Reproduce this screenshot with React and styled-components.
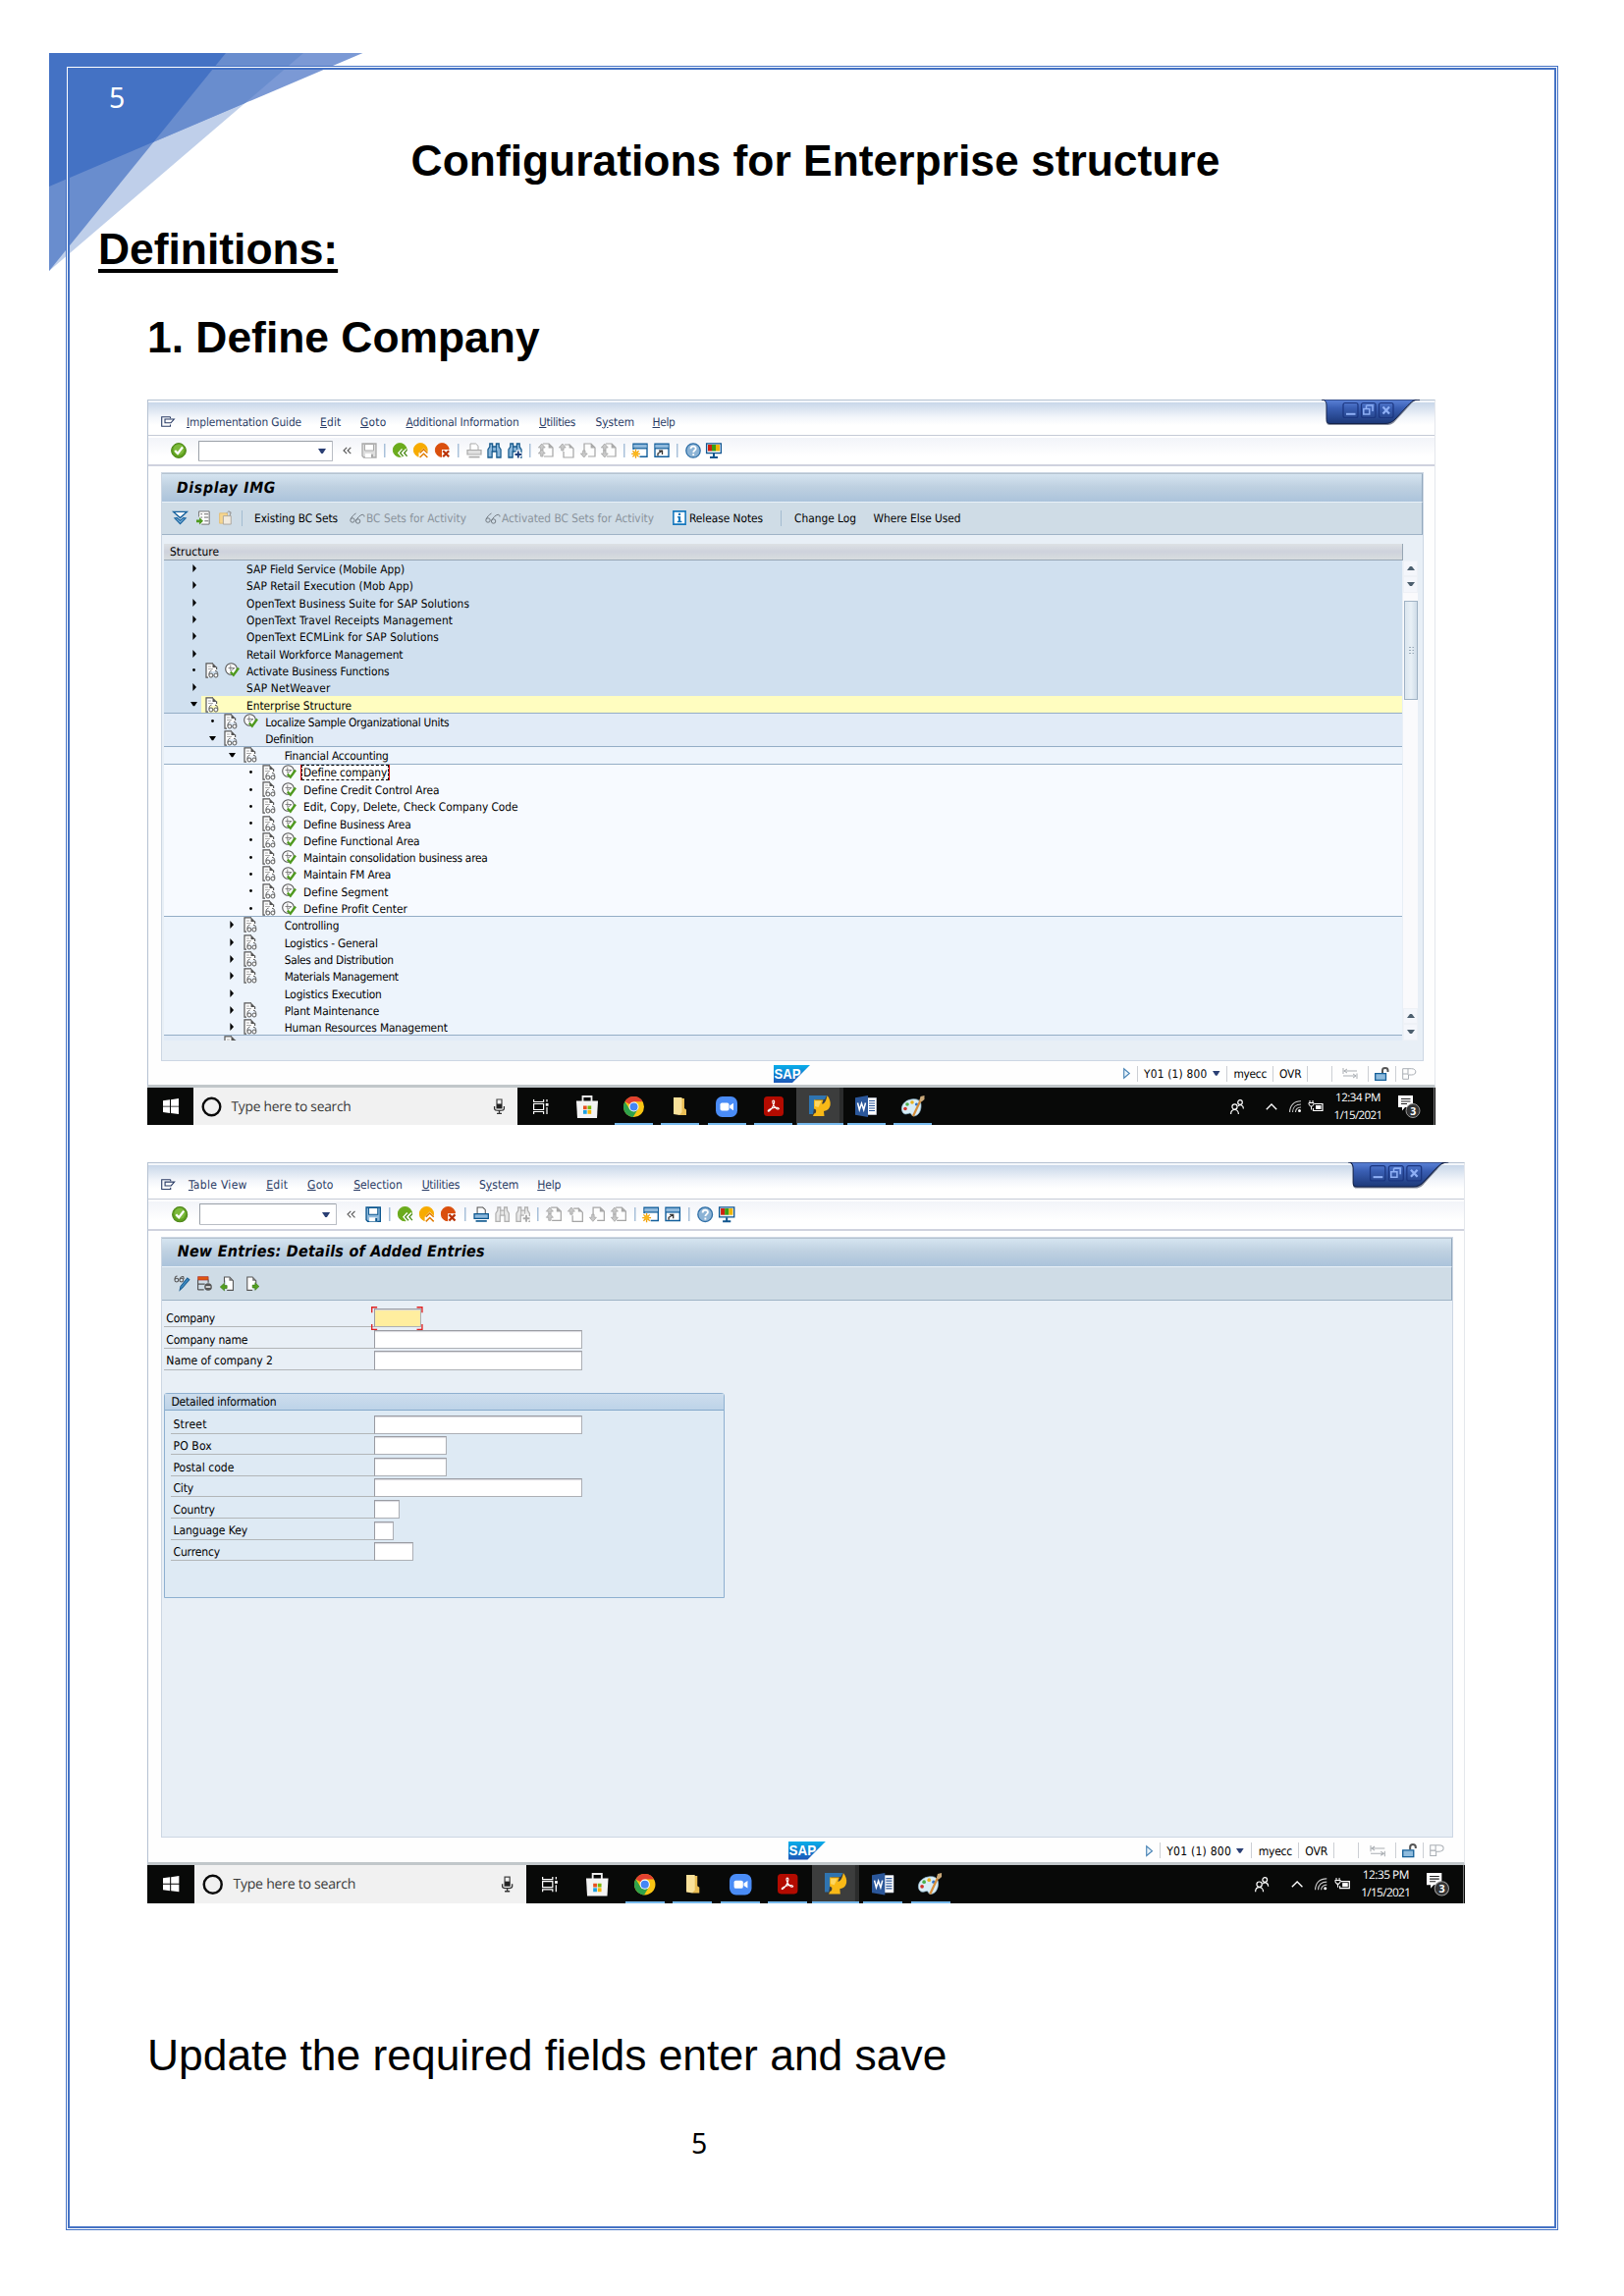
import React from "react";
import styled, { createGlobalStyle } from "styled-components";

const UI = '"DejaVu Sans Condensed", "DejaVu Sans", sans-serif';
const SEGOE = '"Open Sans", "Noto Sans", sans-serif';

const Global = createGlobalStyle`
  *, *::before, *::after { box-sizing: border-box; }
  body { margin: 0; background: #fff; }
`;

/* ---------- text with a set advance width ---------- */

let ctx = null;
const spacingFor = (text, font, width) => {
  if (!width) return 0;
  if (!ctx) ctx = document.createElement("canvas").getContext("2d");
  ctx.font = font;
  return (width - ctx.measureText(text).width) / text.length;
};

const TextSpan = styled.span`
  display: block;
  flex: none;
  width: ${(p) => (p.$w ? `${p.$w}px` : "auto")};
  font: ${(p) => p.$font};
  color: ${(p) => p.$color || "#000"};
  white-space: pre;
  text-rendering: geometricPrecision;
  margin: ${(p) => p.$dy}px 0 ${(p) => -p.$dy}px ${(p) => p.$ml || 0}px;
  line-height: ${(p) => p.$lh || "16px"};
`;

function Text({ children, w, size = 11.8, face = UI, style = "", color, ml, lh, mnemonic, dy = 0 }) {
  const font = `${style} ${size}px ${face}`.trim();
  const gap = spacingFor(children, font, w);
  const body =
    mnemonic === undefined ? children : (
      <>
        {children.slice(0, mnemonic)}
        <u>{children[mnemonic]}</u>
        {children.slice(mnemonic + 1)}
      </>
    );
  return (
    <TextSpan $font={font} $w={w} $color={color} $ml={ml} $lh={lh} $dy={dy} style={{ letterSpacing: `${gap.toFixed(3)}px` }}>
      {body}
    </TextSpan>
  );
}

/* ---------- document page ---------- */

const Page = styled.div`
  position: relative;
  width: 1654px;
  height: 2339px;
  padding: 67px;
  background: #fff;
  overflow: hidden;
`;

const Corner = styled.svg`
  position: absolute;
  left: 50px;
  top: 54px;
  width: 320px;
  height: 223px;
`;

const Frame = styled.main`
  position: relative;
  width: 1520px;
  height: 2205px;
  padding: 70px 25px 0 32px;
  border: 1px solid #4472c4;
  box-shadow: inset 0 0 0 1px #fff, inset 0 0 0 3px #4472c4;
`;

const CornerNumber = styled.span`
  position: absolute;
  left: 43px;
  top: 11px;
  font: 28.5px/40px "Noto Sans", sans-serif;
  color: #fff;
`;

const Heading = styled.h1`
  margin: 0 0 38px;
  font: bold 44.4px/52px "Liberation Sans", Arial, sans-serif;
  color: #000;
  text-align: ${(p) => (p.$center ? "center" : "left")};
  padding-left: ${(p) => p.$indent || 0}px;
  text-decoration: ${(p) => (p.$underline ? "underline" : "none")};
  text-decoration-thickness: 4px;
  text-underline-offset: 5px;
  text-decoration-skip-ink: none;
  white-space: pre;
`;

const Shots = styled.div`
  display: flex;
  flex-direction: column;
  gap: 38px;
  margin: -1px 0 0 50px;
`;

const Note = styled.p`
  margin: 129px 0 0 50px;
  font: 44.4px/52px "Liberation Sans", Arial, sans-serif;
  color: #000;
`;

const PageNumber = styled.p`
  margin: 43px 0 0 604px;
  font: 28.5px/40px "Noto Sans", sans-serif;
  color: #000;
`;

/* ---------- SAP window ---------- */

const Desktop = styled.section`
  zoom: ${(p) => p.$zoom};
  display: flex;
  flex-direction: column;
  width: 1312px;
  height: ${(p) => p.$h}px;
`;

const Win = styled.div`
  position: relative;
  flex: 1;
  min-height: 0;
  display: flex;
  flex-direction: column;
  background: #fefefe;
  border: 1px solid #b6c2d2;
  border-right-color: #e4e7ec;
  border-bottom: 3px solid #c1c7ca;
`;

const MenuBar = styled.div`
  display: flex;
  align-items: center;
  flex: none;
  height: 36px;
  padding: 8px 0 0 13px;
  border-top: 2px solid #f4f7fb;
  border-bottom: 1px solid #c5cad6;
  background: linear-gradient(#c8d7e9, #f2f5fa 45%, #fff 70%);
`;

const ToolBar = styled.div`
  display: flex;
  align-items: center;
  flex: none;
  height: 31px;
  padding: 0 0 1px 23px;
  border-top: 2px solid #fff;
  border-bottom: 2px solid #cfd2de;
  background: linear-gradient(#f2f4f9, #fff 70%);
`;

const Tools = styled.div`
  display: flex;
  align-items: center;
  gap: 5.5px;
  margin-left: 10px;
`;

const ToolSep = styled.i`
  width: 5px;
  height: 14px;
  background: linear-gradient(#a9c1da, #a9c1da) center / 1.5px 100% no-repeat;
`;

const Command = styled.div`
  display: flex;
  align-items: center;
  justify-content: flex-end;
  width: 137px;
  height: 21px;
  margin-left: 12px;
  padding-right: 6px;
  background: #fff;
  border: 1.5px solid #9aa0a8;
  border-right-color: #b9bdc4;
  border-bottom-color: #b9bdc4;
  border-radius: 1px;
`;

const Work = styled.div`
  display: flex;
  flex-direction: column;
  flex: none;
  height: ${(p) => p.$h}px;
  margin: 6px 11px 0 13px;
  border: 1px solid #ccd6e3;
  background: #e8eff6;
`;

const TitleBar = styled.div`
  display: flex;
  align-items: center;
  flex: none;
  height: 30px;
  padding: 0 0 3px 15px;
  border-top: 1.5px solid #b5c3d0;
  border-right: 1px solid #92a8bd;
  border-bottom: 1px solid #e9f1f8;
  background: linear-gradient(#d5e4f0, #bfd1e1 45%, #abc3db);
`;

const AppBar = styled.div`
  display: flex;
  align-items: center;
  flex: none;
  height: 33px;
  padding: 0 0 1px 11px;
  border-right: 1px solid #92a8bd;
  border-bottom: 1.5px solid #9fb3c6;
  background: #cfdce6;
`;

const AppSep = styled.i`
  flex: none;
  width: 1px;
  height: 16px;
  margin-left: ${(p) => p.$ml}px;
  background: #a3bcd1;
`;

const StatusBar = styled.div`
  display: flex;
  align-items: center;
  flex: 1;
  padding: 1px 0 0 637px;
`;

const StatusSep = styled.i`
  flex: none;
  width: 1px;
  height: 16px;
  margin-left: ${(p) => p.$ml}px;
  background: #cccfd4;
`;

const Controls = styled.svg`
  position: absolute;
  right: 14px;
  top: -1px;
  width: 101px;
  height: 28px;
`;

const IconSvg = styled.svg`
  display: block;
  flex: none;
  width: ${(p) => p.$w}px;
  height: ${(p) => p.$h || p.$w}px;
  margin-left: ${(p) => p.$ml || 0}px;
  overflow: visible;
`;

/* ---------- tree ---------- */

const TreeHead = styled.div`
  flex: none;
  height: 17px;
  width: 1262px;
  margin: 9px 0 0 2px;
  padding-left: 6px;
  background: linear-gradient(#dde1e4, #ced2dc 50%, #d8dddf);
  border-bottom: 1.5px solid #97a6b4;
  border-right: 1px solid #97a6b4;
`;

const TreeBody = styled.div`
  display: flex;
  gap: 1px;
  margin-left: 2px;
  height: 488.5px;
`;

const Tree = styled.div`
  width: 1261px;
  height: 100%;
  overflow: hidden;
  background: ${(p) => p.$bg};
`;

const TreeRow = styled.div`
  display: flex;
  align-items: center;
  height: 17.31px;
  padding-left: ${(p) => 24 + p.$level * 19.35}px;
  border-bottom: 1.5px solid ${(p) => (p.$line ? "#94adc6" : "transparent")};
  background: ${(p) =>
    p.$hot ? `linear-gradient(90deg, ${p.$bg} 38px, #fffdc0 38px)` : p.$bg};
`;

const ArrowCell = styled.span`
  display: flex;
  justify-content: center;
  width: 13px;
  margin-right: 5px;
`;

const Slot = styled.span`
  display: block;
  width: ${(p) => p.$w}px;
  height: 16px;
`;

const Focus = styled.span`
  display: block;
  height: 16px;
  margin-left: -2px;
  padding: 0 1px;
  border: 1px dashed #000;
  background: #fff;
  box-shadow: -1px 0 0 #e01010, 1px 0 0 #e01010;
`;

const Scroll = styled.div`
  display: flex;
  flex-direction: column;
  width: 15px;
  height: 100%;
  background: #fafafc;
`;

const ScrollButton = styled.span`
  display: flex;
  align-items: center;
  justify-content: center;
  height: 16.3px;
  border: 1px solid #eef1f6;
  background: #f4f6fb;
`;

const Thumb = styled.span`
  display: flex;
  align-items: center;
  justify-content: center;
  height: 101px;
  margin: 8px 0 auto 1px;
  border: 1px solid #9fb2c4;
  background: linear-gradient(90deg, #dbe6ef, #e8f0f6 50%, #cfdce8);
`;

/* ---------- entry form ---------- */

const Form = styled.div`
  padding: 8px 0 0 2px;
`;

const FieldRow = styled.div`
  display: flex;
  height: 21.15px;
`;

const FieldLabel = styled.label`
  display: block;
  width: ${(p) => p.$w}px;
  height: 18.6px;
  padding: 1px 0 0 2px;
  border-bottom: 1.5px solid #b2b6b8;
`;

const Field = styled.span`
  position: relative;
  display: block;
  width: ${(p) => p.$w}px;
  height: 18.6px;
  border: 1.5px solid #9a9ca3;
  border-right-color: #adb0b5;
  border-bottom-color: #adb0b5;
  background: ${(p) => (p.$active ? "#ffee9f" : "#fff")};
  box-shadow: inset 0 1px 1px #d9d9de;
`;

const FocusCorners = styled.svg`
  position: absolute;
  left: -3.5px;
  top: -3.5px;
  width: 51.5px;
  height: 23.5px;
`;

const Group = styled.fieldset`
  width: 558px;
  height: 204.5px;
  margin: 20.5px 0 0;
  padding: 0;
  border: 1px solid #8eb0d0;
  border-radius: 3px 3px 0 0;
  background: #deeaf4;
`;

const GroupHead = styled.div`
  height: 17px;
  margin-bottom: 4px;
  padding-left: 6px;
  border-bottom: 1.5px solid #84a9cb;
  background: linear-gradient(#cddded, #bdd3e8);
`;

const GroupRows = styled.div`
  padding-left: 6px;
`;

/* ---------- Windows taskbar ---------- */

const TaskBar = styled.div`
  display: flex;
  flex: none;
  height: 38px;
  background: #080908;
`;

const Start = styled.div`
  display: flex;
  align-items: center;
  justify-content: center;
  width: 47px;
`;

const Search = styled.div`
  display: flex;
  align-items: center;
  width: 330px;
  padding-left: 8px;
  background: #f1f1f1;
`;

const TaskCell = styled.div`
  display: flex;
  align-items: center;
  justify-content: center;
  width: 47.4px;
  background: ${(p) => (p.$active ? "#3c3d3d" : "none")};
  box-shadow: ${(p) => (p.$active ? "inset -4px 0 0 #2b2c2c" : "none")};
`;

const TaskMark = styled.span`
  display: flex;
  align-items: center;
  justify-content: center;
  width: ${(p) => (p.$wide ? 47 : 39)}px;
  height: 100%;
  border-top: 2px solid transparent;
  border-bottom: 2px solid ${(p) => (p.$on ? "#76b9ed" : "transparent")};
`;

const Tray = styled.div`
  display: flex;
  align-items: center;
  margin-left: auto;
  padding-right: 1px;
`;

const Clock = styled.div`
  display: flex;
  flex-direction: column;
  align-items: center;
  width: 50px;
  margin-left: 10px;
`;

const ShowDesktop = styled.i`
  width: 1px;
  height: 38px;
  margin-left: 13px;
  background: #777;
`;

/* ---------- icons ---------- */

const I = ({ w = 16, h, ml, vb = "0 0 16 16", children }) => (
  <IconSvg $w={w} $h={h} $ml={ml} viewBox={vb} preserveAspectRatio="none" fill="none">{children}</IconSvg>
);

const MenuIcon = () => (
  <I w={14} h={14} vb="0 0 14 14">
    <path d="M9.500.700H.700v9.600h8.800V8.500M9.500.700v1.500" stroke="#2b3d66" strokeWidth="1.100" />
    <path d="M4 3h9.300L10 6.800H4z" fill="#fff" stroke="#2b3d66" strokeWidth="1.100" />
  </I>
);
const CheckIcon = () => (
  <I>
    <circle cx="8" cy="8" r="7.4" fill="#5fa01e" stroke="#4c8419" />
    <circle cx="8" cy="7" r="5.5" fill="#7dba3c" />
    <path d="M4.2 8l2.8 3 5-6.5" stroke="#fff" strokeWidth="2.2" />
  </I>
);
const Down = ({ w = 8, ml, color = "#2a3f74" }) => (
  <I w={w} h={w * 0.62} ml={ml} vb="0 0 8 5"><path d="M0 0h8L4.8 5H3.2z" fill={color} /></I>
);
const Collapse = () => (
  <I w={9} h={8} ml={9.5} vb="0 0 9 8"><path d="M4.2.8L1 4l3.2 3.2M8.3.8L5.1 4l3.2 3.2" stroke="#555" strokeWidth="1.1" /></I>
);
const SaveIcon = ({ on }) => {
  const c = on ? "#0b568e" : "#a9a9a9";
  return (
    <I>
      <path d="M1 1h14v14H2.500L1 13.500z" fill={on ? "#8db9dc" : "#dedede"} stroke={c} strokeWidth="1.300" />
      <path d="M3.500 1.500h9v6.500h-9z" fill="#fff" stroke={c} /><path d="M4 11h8v4H4z" fill="#fff" /><path d="M10 11.500h2V15h-2z" fill={c} />
    </I>
  );
};
const RoundNav = ({ kind }) => {
  const fill = { back: "#6bab1d", up: "#f7ab00", stop: "#da4f0d" }[kind];
  return (
    <I>
      <circle cx="7.3" cy="7.5" r="6.9" fill={fill} stroke={fill} />
      {kind === "back" && (<><path d="M10.500 7.300L7.600 10.500l2.900 3.300M14.600 7.300l-2.900 3.200 2.900 3.300" stroke="#fff" strokeWidth="4" /><path d="M10.500 7.300L7.600 10.500l2.900 3.300M14.600 7.300l-2.900 3.200 2.900 3.300" stroke="#4c8c18" strokeWidth="1.300" /></>)}
      {kind === "up" && (<><path d="M5.500 10.500l5-5 5 5V16h-10z" fill="#fff" /><path d="M6.600 10.500l3.900-3.700 3.900 3.700M6.600 15l3.900-3.700 3.900 3.700" stroke="#e07b00" strokeWidth="1.500" /></>)}
      {kind === "stop" && (<><path d="M7 7h8.500v8.500H7z" fill="#fff" /><path d="M8.200 8.200l6 6m0-6l-6 6" stroke="#b93205" strokeWidth="2.200" /></>)}
    </I>
  );
};
const PrintIcon = ({ on }) => {
  const c = on ? "#0b568e" : "#a9a9a9";
  return (
    <I>
      <path d="M4 7V1h5.500l2.500 2.300V7" fill="#fff" stroke={on ? "#555" : c} />
      <path d="M1 7.500h14v4.500H1z" fill={on ? "#8db9dc" : "#e0e0e0"} stroke={c} strokeWidth="1.200" />
      <path d="M2.500 14.600h11" stroke={c} strokeWidth="1.600" />
    </I>
  );
};
const FindIcon = ({ on, next }) => {
  const c = on ? "#17598c" : "#b0b0b0";
  const f = on ? "#8ab6da" : "#e8e8e8";
  return (
    <I w={15} h={16}>
      <path d="M3 1h3v3h4V1h3v3l2 3v8h-4.500V9h-5v6H1V7l2-3z" fill={f} stroke={c} strokeWidth="1.300" />
      <path d="M6 4v5M10 4v5" stroke={c} />
      {next && <path d="M11.500 7.500v8.500M7.500 12h8" stroke="#fff" strokeWidth="4.600" />}
      {next && <path d="M11.500 8.500v7M8 12h7" stroke={on ? "#1e3f7d" : "#aaa"} strokeWidth="2" />}
    </I>
  );
};
const PageIcon = ({ dir }) => (
  <I>
    <path d={dir === "last" || dir === "first" ? "M5 1h6l4 4v9H6" : dir === "up" ? "M6 2h5l4 4v9H5V9" : "M4 9V1h7l4 4v9H8"} fill="#fdfdfd" stroke="#a5a5a5" strokeWidth="1.2" />
    <path d="M10.6 1v4.4H15z" fill="#a8a8a8" />
    {dir !== "down" && <path d="M3.800 1l3.400 4H5v3H2.700V5H.4z" fill="#c9c9c9" stroke="#a5a5a5" strokeWidth=".8" />}
    {dir === "first" && <path d="M3.800 7l3.400 4H5v3H2.700V11H.4z" fill="#c9c9c9" stroke="#a5a5a5" strokeWidth=".8" />}
    {(dir === "down" || dir === "last") && <path d="M3.800 15l3.400-4H5V8H2.700v3H.4z" fill="#c9c9c9" stroke="#a5a5a5" strokeWidth=".8" />}
  </I>
);
const SessionIcon = ({ link }) => (
  <I>
    <path d="M1 1.200h14v13H1z" fill="#fff" stroke="#135f9c" strokeWidth="1.400" />
    <path d="M1.600 1.800h12.800v3.600H1.600z" fill="#8fb9dc" /><path d="M1 5.800h14" stroke="#135f9c" strokeWidth="1.300" />
    {link ? <path d="M4 13.500V11l4-2.500M5 8.200h3.500V12" stroke="#333" strokeWidth="1.300" /> : (
      <><path d="M-.5 7h8v9h-8z" fill="#fff" /><path d="M3.500 6.800v9M-.8 11.300h8.700M.4 8.200l6.200 6.200M6.600 8.200L.4 14.400" stroke="#f2a007" strokeWidth="1.300" /><circle cx="3.500" cy="11.300" r="2.400" fill="#fbb81c" /></>
    )}
  </I>
);
const HelpIcon = () => (
  <I>
    <circle cx="8" cy="8" r="7.200" fill="#8cb3d5" stroke="#2e6ea6" strokeWidth="1.300" />
    <path d="M5.500 6.300c0-3.500 5.200-3.300 5.200-.4 0 1.800-2.500 1.900-2.500 4M8.200 11.300v1.800" stroke="#fff" strokeWidth="1.800" />
  </I>
);
const MonitorIcon = () => (
  <I>
    <path d="M.6.8h14.800v9.800H.6z" fill="#e8f1f8" stroke="#11568f" strokeWidth="1.300" />
    <path d="M2 2h4v6.500H2z" fill="#d0200f" /><path d="M6 2h4v6.500H6z" fill="#3c9e14" /><path d="M10 2h4v6.500h-4z" fill="#f0b400" />
    <path d="M8 11v3M4 15h8" stroke="#11568f" strokeWidth="2" />
  </I>
);

const ExpandAll = () => (
  <I w={15} h={15}>
    <path d="M.8 1.500h14.400L8 8z" fill="#fff" stroke="#135f9c" strokeWidth="1.500" />
    <path d="M4.500 8L8 11l3.500-3 2.500.5-6 6-6-6z" fill="#7bb0d8" stroke="#135f9c" strokeWidth="1.200" />
  </I>
);
const PositionIcon = () => (
  <I w={14} h={15} ml={9}>
    <path d="M3 7V1h12v14H6" fill="#fff" stroke="#666" /><path d="M5 4h2m2 0h5M5 7.500h2m2 0h5M9.500 11.500H14" stroke="#555" />
    <path d="M0 10h3.500V7.500L8 11.500l-4.500 4V13H0z" fill="#4f9a1f" />
  </I>
);
const BagIcon = () => (
  <I w={14} h={15} ml={9}>
    <path d="M.7 3h9v11h-9z" fill="#f6d690" stroke="#e2bd74" /><path d="M5 6h9v9H5z" fill="#f2ebdf" stroke="#a9a39a" /><path d="M9 3c2-3 4-2 4 0v3M11 1l3 1-1 3" stroke="#999" />
  </I>
);
const Glasses = ({ ml }) => (
  <I w={16} h={12} ml={ml} vb="0 0 16 12">
    <path d="M1.200 7C2 4.500 4 2.500 6.500 1M6.800 8.200C8 5.500 10.500 2.800 13 2.300c1.400 0 2 .6 2 2.200" stroke="#747c84" />
    <circle cx="3" cy="8" r="2.200" stroke="#747c84" /><circle cx="8.600" cy="9" r="2.200" stroke="#747c84" />
  </I>
);
const InfoIcon = () => (
  <I w={14} h={15} ml={19}>
    <path d="M1 1h14v14H1z" fill="#fff" stroke="#1477bd" strokeWidth="1.800" />
    <path d="M6.800 3h2.500v2.200H6.800zM5.800 6.500h3.500v5h1.500V13H5.500v-1.500h1.300V8h-1z" fill="#1477bd" />
  </I>
);
const DisplayChange = () => (
  <I w={16} h={16}>
    <path d="M1 4.500C1 2.500 2 1 3.500 1M6 4.500C6 2.500 8 1 9.500 1.500L10 4" stroke="#555" /><circle cx="2.800" cy="5" r="1.900" stroke="#555" /><circle cx="7.600" cy="5" r="1.900" stroke="#555" />
    <path d="M15.500 4.500L9 12.200 6 15l.8-3.800L13.500 3z" fill="#3e8dc4" stroke="#1d5f93" />
  </I>
);
const DeleteRow = () => (
  <I w={15} h={15} ml={8}>
    <path d="M.6.6h11v3.600H.6z" fill="#e0560f" stroke="#a33" strokeWidth=".7" /><path d="M.6 4v10.500M.6 8.500H8M.6 14.500H7M11.600 4v3" stroke="#555" strokeWidth="1.200" />
    <circle cx="11.500" cy="11.500" r="4" fill="#555" /><path d="M9 11.500h5" stroke="#fff" strokeWidth="1.500" />
  </I>
);
const EntryNav = ({ next, ml }) => (
  <I w={14} h={15} ml={ml}>
    <path d={next ? "M8 15H2V1h6l4 4v3" : "M6 1h5l4 4v10H8M5 7V1h2"} fill="#fff" stroke="#555" strokeWidth="1.200" />
    <path d={next ? "M8 1v4h4z" : "M10.500 1v4H15z"} fill="#777" />
    <path d={next ? "M15.500 11L11 7v2.500H8v3h3V15z" : "M.3 11.500L5 7.500V10h3v3H5v2.500z"} fill="#54a01f" stroke="#377714" strokeWidth=".7" />
  </I>
);

const Right = () => <I w={4} h={8} vb="0 0 5 8"><path d="M.5 0L5 4 .5 8z" fill="#000" /></I>;
const DocIcon = () => (
  <I w={14} h={16} vb="0 0 14 16">
    <path d="M1 15.500V.8h6.500L11.800 5v3.500L4 9.500V15z" fill="#fff" />
    <path d="M3 15.200H1V.8h7M11.600 4.500V7" stroke="#555" strokeWidth="1.200" /><path d="M7.500.3L12 5H7.500z" fill="#555" />
    <path d="M3 4h3M3 6.500h5" stroke="#aaa" />
    <path d="M3.900 12.500c0-2.600 1-4.200 2.600-4.400M10 8.300c1.700 0 2.800 1 2.800 4" stroke="#555" /><circle cx="5.900" cy="13" r="2" fill="#fff" stroke="#555" /><circle cx="10.900" cy="13" r="2" fill="#fff" stroke="#555" />
  </I>
);
const ExecIcon = () => (
  <I w={15} h={15} ml={6} vb="0 0 15 15">
    <circle cx="6.500" cy="6.500" r="5.800" fill="#fff" stroke="#555" strokeWidth="1.100" />
    <path d="M5.800 2.500v6M3.500 5.500h6.500L6 8.500" stroke="#777" strokeWidth=".9" /><path d="M5.800 9.500l3 3.200L14 5.500" stroke="#4f9a1f" strokeWidth="2.400" />
  </I>
);

const SapLogo = ({ id }) => (
  <I w={37} h={18} vb="0 0 37 18">
    <defs><linearGradient id={id} x1="0" y1="0" x2="0" y2="1"><stop stopColor="#08aeea" /><stop offset="1" stopColor="#1c57b8" /></linearGradient></defs>
    <path d="M0 0h37L19 18H0z" fill={`url(#${id})`} />
    <text x="0.500" y="13.800" fill="#fff" fontFamily="Liberation Sans" fontWeight="bold" fontSize="14" textLength="27" lengthAdjust="spacingAndGlyphs">SAP</text>
  </I>
);
const PlayIcon = () => <I w={7} h={11} ml={319} vb="0 0 7 11"><path d="M.7.8v9.400L6.300 5.500z" fill="#e8f3fb" stroke="#4782b4" strokeWidth="1.100" /></I>;
const ArrowsIcon = () => (
  <I w={16} h={11} ml={10} vb="0 0 16 11"><path d="M1 0v6M1.500 3H15M5 1L2 3l3 2M15 5.500V11M1 8h13M11 6l3 2-3 2" stroke="#a9adb2" /></I>
);
const LockIcon = () => (
  <I w={15} h={14} ml={6} vb="0 0 15 14"><path d="M8 6V3.500C8 .2 13.500.2 13.500 3.500V5" stroke="#555" strokeWidth="2" /><path d="M.7 6.700h10.800v6.600H.7z" fill="#8ebbdd" stroke="#155f98" strokeWidth="1.300" /></I>
);
const PIcon = () => (
  <I w={15} h={12} ml={6} vb="0 0 15 12"><path d="M.7.7h9c5.500 0 5.500 6.300 0 6.300H6.500v4.300H.7zM6 .7V7M.7 6h5" stroke="#a9aeb4" /></I>
);

function WindowControls({ id }) {
  return (
    <Controls viewBox="0 0 101 28">
      <defs><linearGradient id={id} x1="0" y1="0" x2="0" y2="1"><stop stopColor="#5c83d8" /><stop offset=".35" stopColor="#3a5fb4" /><stop offset="1" stopColor="#1c3878" /></linearGradient></defs>
      <path d="M0 0h101c-8 0-10 5-14 9l-11 12c-3 4-6 5-10 5H9c-3 0-4-1-4-4V6C5 2 3 0 0 0z" fill="#24304c" opacity=".55" />
      <path d="M0 0h100c-8 0-10 4-14 8L75 20c-3 3-6 4.500-10 4.500H9c-3 0-4-1-4-4V6C5 2 3 0 0 0z" fill={`url(#${id})`} stroke="#14234a" strokeWidth="1" />
      <g fill="none" stroke="#1b3680" strokeWidth="1.200"><rect x="22" y="3.500" width="15" height="15" rx="2" /><rect x="40.500" y="3.500" width="14.500" height="15" rx="2" /><rect x="58.500" y="3.500" width="14.500" height="15" rx="2" /></g>
      <path d="M25 14.800h9.500" stroke="#8fb0f5" strokeWidth="2" />
      <path d="M45.500 6h6.500v6M42.800 9.500h6v5.500h-6zM45.500 6v3" stroke="#8fb0f5" strokeWidth="1.500" fill="none" />
      <path d="M62.500 7.500l6.500 7m0-7l-6.500 7" stroke="#8fb0f5" strokeWidth="2.200" />
    </Controls>
  );
}

/* taskbar icons */
const Flag = () => (
  <I w={16} h={16}><path d="M0 2.300L7 1.300v6.400H0zM8 1.200L16 0v7.700H8zM0 8.500h7v6.400l-7-1zM8 8.500h8V16l-8-1.100z" fill="#fff" /></I>
);
const Ring = () => <I w={21} h={21} vb="0 0 21 21"><circle cx="10.500" cy="10.500" r="8.800" stroke="#0a0a0a" strokeWidth="2.400" /></I>;
const Mic = () => (
  <I w={11} h={16} ml={145} vb="0 0 11 16"><path d="M3 1h5v9H3z" stroke="#444" strokeWidth="1.200" /><path d="M3 5.500h5V10H3z" fill="#222" /><path d="M.6 8v2.500c0 2.500 9.800 2.500 9.800 0V8M5.500 13v2M3 15.400h5" stroke="#333" strokeWidth="1.300" /></I>
);
const TaskView = () => (
  <I w={16} h={15} vb="0 0 16 15"><path d="M.6 0v2.500h10V0M.6 4.500h10v6H.6zM.6 15v-2.500h10V15M14 0v2.500M14 8v7" stroke="#fff" strokeWidth="1.200" /><path d="M12.800 4h2.700v2.700h-2.700z" fill="#fff" /></I>
);
const Store = () => (
  <I w={22} h={23} vb="0 0 22 23"><path d="M6.500 6V1h9v5" stroke="#eee" strokeWidth="1.800" /><path d="M0 5.500h22L21 23H1z" fill="#f4f4f4" /><path d="M7 10.500h3.700v3.700H7z" fill="#e8501f" /><path d="M11.500 10.500h3.700v3.700h-3.700z" fill="#7db700" /><path d="M7 15h3.700v3.800H7z" fill="#1ba1e2" /><path d="M11.500 15h3.700v3.800h-3.700z" fill="#f8b400" /></I>
);
const Chrome = () => (
  <I w={21} h={21} vb="0 0 21 21"><circle cx="10.500" cy="10.500" r="10.500" fill="#f9c513" /><path d="M1.400 5.300a10.500 10.500 0 0118.200 0H10.500v5z" fill="#e2402f" /><path d="M1.400 5.200A10.500 10.500 0 009.800 21l4.800-8-8.600-.5z" fill="#2fa24b" /><circle cx="10.500" cy="10.500" r="5" fill="#fff" /><circle cx="10.500" cy="10.500" r="4" fill="#4486f4" /></I>
);
const Folder = () => (
  <I w={13} h={18} vb="0 0 13 18"><path d="M8 1h3v10l2 1.500V18H6z" fill="#e9bd54" /><path d="M0 0h8.500v15L6 18 0 17z" fill="#f9e19a" /></I>
);
const Zoom = () => (
  <I w={22} h={21} vb="0 0 22 21"><rect width="22" height="21" rx="6.500" fill="#4a8cf6" /><rect x="4.500" y="6.500" width="9" height="8" rx="1.800" fill="#fff" /><path d="M14.200 9.300L18 6.800v7.400l-3.800-2.500z" fill="#fff" /></I>
);
const Acrobat = () => (
  <I w={20} h={20} vb="0 0 20 20"><rect width="20" height="20" rx="3.500" fill="#b30b00" /><path d="M9.500 4c2.500 0 .5 5-1.500 8-1.500 2.300-4 4.200-3.800 2.600.3-1.800 6.300-3.600 9-3.300 3.500.4 2.300 2.600-.3 1.200C10 10.700 7.500 4 9.500 4z" stroke="#fff" strokeWidth="1.100" /></I>
);
const SapGui = () => (
  <I w={22} h={22} vb="0 0 22 22">
    <path d="M0 0h18l-2 4H6.500L4 19H0z" fill="#2f74b0" />
    <path d="M5 4.500h9.500l-1.500 4c2.500.5 4.500-3 5.500-8.500 5 6 4.500 15-3.500 16l.5 5H4l1-2.500c2 0 2.500-2 2-4l-2-1z" fill="#f9b917" />
    <path d="M6 5.500h6.500L9.500 12 6 11z" fill="#fdd661" />
  </I>
);
const Word = () => (
  <I w={22} h={22} vb="0 0 22 22"><path d="M10 2.500h11.500v17H10z" fill="#fff" stroke="#cfd8e8" strokeWidth=".6" /><path d="M14 5.500h6M14 8h6M14 10.500h6M14 13h6M14 15.500h6" stroke="#2b579a" strokeWidth="1.200" /><path d="M0 2.200L13 0v22L0 19.800z" fill="#2b579a" /><path d="M2.500 7.500l1.800 7 2.200-6.500 2.200 6.500 1.800-7" stroke="#fff" strokeWidth="1.500" /></I>
);
const Paint = () => (
  <I w={24} h={22} vb="0 0 24 22"><path d="M10 4C3 5-1 11 .8 16c2 5 6 2 8 2 2 .3 1 3 4 3 6-.5 8-8 7-13-1.500-4-5-5-9.800-4z" fill="#d8edf7" stroke="#8fb9cf" strokeWidth=".7" /><circle cx="6" cy="9" r="1.800" fill="#4bb04b" /><circle cx="11" cy="7" r="1.800" fill="#e8b01d" /><circle cx="4" cy="13.500" r="1.800" fill="#d0342c" /><circle cx="15.500" cy="9" r="1.600" fill="#3274c9" /><path d="M20 4L12 21" stroke="#d58d3a" strokeWidth="2.200" /><path d="M18.500 5l1-4 4-1v4l-3 2.500z" fill="#c9a878" /></I>
);
const People = () => (
  <I w={14} h={15} vb="0 0 14 15"><circle cx="4.500" cy="7.500" r="2.600" stroke="#fff" strokeWidth="1.200" /><path d="M.6 15c0-6 7.800-6 7.800 0" stroke="#fff" strokeWidth="1.200" /><circle cx="10" cy="3" r="2.300" stroke="#fff" strokeWidth="1.200" /><path d="M8 7c2-2.500 5.400-1 5.400 2.500" stroke="#fff" strokeWidth="1.200" /></I>
);
const Chevron = () => <I w={12} h={7} ml={22} vb="0 0 12 7"><path d="M.8 6.200L6 1l5.200 5.200" stroke="#fff" strokeWidth="1.300" /></I>;
const Wifi = () => (
  <I w={12} h={12} ml={11.5} vb="0 0 12 12"><path d="M.6 12C.6 5 5 .8 12 .8M3.500 12c0-5 3.500-8 8.500-8M6.500 12c0-3 2-5 5.500-5" stroke="#ccc" strokeWidth="1.100" /><circle cx="10.500" cy="10.500" r="1.500" fill="#fff" /></I>
);
const Battery = () => (
  <I w={15} h={12} ml={8.5} vb="0 0 15 12"><path d="M5.500 3.500H14v7H4.500V8" stroke="#fff" strokeWidth="1.200" /><path d="M7 5h5.500v4H7z" fill="#fff" /><path d="M1 0v2.500M4 0v2.500M0 2.500h5v1.500L3.500 6h-2L0 4zM2.500 6v3.500" stroke="#fff" /></I>
);
const Notify = () => (
  <I w={23} h={23} ml={16} vb="0 0 23 23"><path d="M0 0h15v12H7l-3 3.500V12H0z" fill="#fff" /><path d="M3 3.500h9.500M3 6h9.500M3 8.500h6" stroke="#222" /><circle cx="15" cy="15.500" r="7" fill="#333" stroke="#999" /><text x="12.200" y="19.500" fontFamily="Open Sans" fontWeight="bold" fontSize="10.500" fill="#fff">3</text></I>
);

/* ---------- assembled parts ---------- */

function SapTools({ changing }) {
  return (
    <Tools>
      <SaveIcon on={changing} />
      <ToolSep />
      <RoundNav kind="back" /><RoundNav kind="up" /><RoundNav kind="stop" />
      <ToolSep />
      <PrintIcon on={changing} /><FindIcon on={!changing} /><FindIcon on={!changing} next />
      <ToolSep />
      <PageIcon dir="first" /><PageIcon dir="up" /><PageIcon dir="down" /><PageIcon dir="last" />
      <ToolSep />
      <SessionIcon /><SessionIcon link />
      <ToolSep />
      <HelpIcon /><MonitorIcon />
    </Tools>
  );
}

function SapWindow({ id, zoom, height, workHeight, menus, title, titleWidth, appBar, changing, time, children }) {
  return (
    <Desktop $zoom={zoom} $h={height}>
      <Win>
        <MenuBar>
          <MenuIcon />
          {menus.map(([label, w, ml, key]) => (
            <Text key={label} w={w} ml={ml} color="#2b3d66" mnemonic={key || 0} dy={-1}>{label}</Text>
          ))}
        </MenuBar>
        <ToolBar>
          <CheckIcon />
          <Command><Down /></Command>
          <Collapse />
          <SapTools changing={changing} />
        </ToolBar>
        <Work $h={workHeight}>
          <TitleBar><Text style="italic bold" size={15.6} w={titleWidth} lh="20px" dy={1}>{title}</Text></TitleBar>
          <AppBar>{appBar}</AppBar>
          {children}
        </Work>
        <StatusBar>
          <SapLogo id={`${id}-logo`} />
          <PlayIcon />
          <StatusSep $ml={7} />
          <Text w={64.5} ml={6} dy={0.5}>Y01 (1) 800</Text>
          <Down w={7.5} ml={5} />
          <StatusSep $ml={7} />
          <Text w={33.5} ml={6.5} dy={0.5}>myecc</Text>
          <StatusSep $ml={5.5} />
          <Text w={22.5} ml={6.5} dy={0.5}>OVR</Text>
          <StatusSep $ml={5.5} />
          <StatusSep $ml={24} />
          <ArrowsIcon />
          <StatusSep $ml={9.5} />
          <LockIcon />
          <StatusSep $ml={6} />
          <PIcon />
        </StatusBar>
        <WindowControls id={`${id}-ctl`} />
      </Win>
      <TaskBar>
        <Start><Flag /></Start>
        <Search><Ring /><Text face={SEGOE} size={13.8} w={122} ml={9.5} dy={1} color="#3a3a3a">Type here to search</Text><Mic /></Search>
        <TaskCell><TaskMark><TaskView /></TaskMark></TaskCell>
        <TaskCell><TaskMark><Store /></TaskMark></TaskCell>
        <TaskCell><TaskMark $on><Chrome /></TaskMark></TaskCell>
        <TaskCell><TaskMark $on><Folder /></TaskMark></TaskCell>
        <TaskCell><TaskMark $on><Zoom /></TaskMark></TaskCell>
        <TaskCell><TaskMark $on><Acrobat /></TaskMark></TaskCell>
        <TaskCell $active><TaskMark $on $wide><SapGui /></TaskMark></TaskCell>
        <TaskCell><TaskMark $on><Word /></TaskMark></TaskCell>
        <TaskCell><TaskMark $on><Paint /></TaskMark></TaskCell>
        <Tray>
          <People /><Chevron /><Wifi /><Battery />
          <Clock>
            <Text face={SEGOE} size={11.6} w={46} lh="17.5px" dy={0.5} color="#fff">{time}</Text>
            <Text face={SEGOE} size={11.6} w={49} lh="17.5px" dy={0.5} color="#fff">1/15/2021</Text>
          </Clock>
          <Notify />
          <ShowDesktop />
        </Tray>
      </TaskBar>
    </Desktop>
  );
}

const BG = ["#d0e0ef", "#e1ebf7", "#edf4fc", "#f7faff"];

/* kind: r = closed node, d = open node, l = leaf */
const ROWS = [
  [0, "r", "", "SAP Field Service (Mobile App)", 161],
  [0, "r", "", "SAP Retail Execution (Mob App)", 170],
  [0, "r", "", "OpenText Business Suite for SAP Solutions", 227],
  [0, "r", "", "OpenText Travel Receipts Management", 210],
  [0, "r", "", "OpenText ECMLink for SAP Solutions", 196],
  [0, "r", "", "Retail Workforce Management", 159.5],
  [0, "l", "de", "Activate Business Functions", 145.5],
  [0, "r", "", "SAP NetWeaver", 85.5],
  [0, "d", "d", "Enterprise Structure", 107, { line: true, hot: true }],
  [1, "l", "de", "Localize Sample Organizational Units", 187],
  [1, "d", "d", "Definition", 49, { line: true }],
  [2, "d", "d", "Financial Accounting", 106, { line: true }],
  [3, "l", "de", "Define company", 85, { focus: true }],
  [3, "l", "de", "Define Credit Control Area", 138.5],
  [3, "l", "de", "Edit, Copy, Delete, Check Company Code", 218.5],
  [3, "l", "de", "Define Business Area", 109.5],
  [3, "l", "de", "Define Functional Area", 118.5],
  [3, "l", "de", "Maintain consolidation business area", 187.5],
  [3, "l", "de", "Maintain FM Area", 89],
  [3, "l", "de", "Define Segment", 86.5],
  [3, "l", "de", "Define Profit Center", 106, { line: true }],
  [2, "r", "d", "Controlling", 55.5],
  [2, "r", "d", "Logistics - General", 95],
  [2, "r", "d", "Sales and Distribution", 111],
  [2, "r", "d", "Materials Management", 116],
  [2, "r", "", "Logistics Execution", 99],
  [2, "r", "d", "Plant Maintenance", 96.5],
  [2, "r", "d", "Human Resources Management", 166, { line: true }],
];

function ImgTree() {
  return (
    <>
      <TreeHead><Text w={50}>Structure</Text></TreeHead>
      <TreeBody>
        <Tree $bg={BG[1]}>
          {ROWS.map(([level, kind, icons, label, w, o = {}]) => (
            <TreeRow key={label} $level={level} $bg={BG[level]} $line={o.line} $hot={o.hot}>
              <ArrowCell>
                {kind === "r" && <Right />}
                {kind === "d" && <Down w={7} color="#000" />}
                {kind === "l" && <I w={3} vb="0 0 3 3"><circle cx="1.500" cy="1.500" r="1.400" fill="#000" /></I>}
              </ArrowCell>
              {icons.includes("d") ? <DocIcon /> : <Slot $w={14} />}
              {icons.includes("e") ? <ExecIcon /> : <Slot $w={21} />}
              {o.focus ? <><Slot $w={7} /><Focus><Text w={w} lh="14px" dy={0.5}>{label}</Text></Focus></> : <Text w={w} ml={7} dy={1}>{label}</Text>}
            </TreeRow>
          ))}
          <TreeRow $level={1} $bg={BG[1]}><Slot $w={18} /><DocIcon /></TreeRow>
        </Tree>
        <Scroll>
          <ScrollButton><I w={8} h={4} vb="0 0 8 4"><path d="M0 4l3-4h2l3 4z" fill="#4d5f6e" /></I></ScrollButton>
          <ScrollButton><I w={8} h={4} vb="0 0 8 4"><path d="M0 0l3 4h2l3-4z" fill="#4d5f6e" /></I></ScrollButton>
          <Thumb><I w={5} h={7} vb="0 0 5 7"><path d="M0 .5h2M0 3.500h2M0 6.500h2M3.500.5h1.500M3.500 3.500h1.500M3.500 6.500h1.500" stroke="#9aabb9" /></I></Thumb>
          <ScrollButton><I w={8} h={4} vb="0 0 8 4"><path d="M0 4l3-4h2l3 4z" fill="#4d5f6e" /></I></ScrollButton>
          <ScrollButton><I w={8} h={4} vb="0 0 8 4"><path d="M0 0l3 4h2l3-4z" fill="#4d5f6e" /></I></ScrollButton>
        </Scroll>
      </TreeBody>
    </>
  );
}

function Entry({ label, w, labelWidth, field, active }) {
  return (
    <FieldRow>
      <FieldLabel $w={labelWidth}><Text w={w} dy={0.7}>{label}</Text></FieldLabel>
      <Field $w={field} $active={active}>
        {active && (
          <FocusCorners viewBox="0 0 51.5 23.5" fill="none">
            <path d="M.7 6V.7H6M45.500.7h5.300V6M.7 17.500v5.300H6M45.500 22.800h5.300v-5.300" stroke="#e02020" strokeWidth="1.300" />
          </FocusCorners>
        )}
      </Field>
    </FieldRow>
  );
}

const DETAILS = [
  ["Street", 33.5, 208], ["PO Box", 38.5, 73], ["Postal code", 60.5, 73], ["City", 20, 208],
  ["Country", 41.5, 26], ["Language Key", 74, 19.5], ["Currency", 46.5, 40],
];

const MENUS_1 = [
  ["Implementation Guide", 117, 12], ["Edit", 21.5, 19], ["Goto", 26.5, 19.5], ["Additional Information", 115, 20],
  ["Utilities", 37, 20.5], ["System", 39.5, 20.5, 1], ["Help", 23, 18.5],
];
const MENUS_2 = [
  ["Table View", 58.5, 13], ["Edit", 21.5, 19], ["Goto", 26, 19.5], ["Selection", 48.5, 20],
  ["Utilities", 37.5, 19.5], ["System", 39.5, 19.5, 1], ["Help", 23.5, 18.5],
];

export default function App() {
  return (
    <Page>
      <Global />
      <Corner viewBox="50 54 320 223">
        <path d="M50 54H309L50 276z" fill="#bfcfea" />
        <path d="M50 54H369.500L50 190z" fill="#7b99d5" />
        <path d="M50 54H309L249.600 105 50 190z" fill="#698dce" />
        <path d="M50 54H230L50 276z" fill="#698dce" />
        <path d="M50 54H230L156.600 144.500 50 190z" fill="#4472c4" />
      </Corner>
      <Frame>
        <CornerNumber>5</CornerNumber>
        <Heading $center>Configurations for Enterprise structure</Heading>
        <Heading as="h2" $underline>Definitions:</Heading>
        <Heading as="h3" $indent={50}>1. Define Company</Heading>
        <Shots>
          <SapWindow
            id="img" zoom={1} height={739} workHeight={600} menus={MENUS_1} title="Display IMG" titleWidth={101} time="12:34 PM"
            appBar={
              <>
                <ExpandAll /><PositionIcon /><BagIcon /><AppSep $ml={9} />
                <Text w={85} ml={12}>Existing BC Sets</Text>
                <Glasses ml={12} /><Text w={102} ml={1} color="#8a939c">BC Sets for Activity</Text>
                <Glasses ml={19} /><Text w={155} ml={1} color="#8a939c">Activated BC Sets for Activity</Text>
                <InfoIcon /><Text w={75} ml={3}>Release Notes</Text>
                <AppSep $ml={18} />
                <Text w={63} ml={13}>Change Log</Text>
                <Text w={89} ml={17.5}>Where Else Used</Text>
              </>
            }
          >
            <ImgTree />
          </SapWindow>
          <SapWindow
            id="entry" zoom={1.0229} height={738} workHeight={599} menus={MENUS_2} title="New Entries: Details of Added Entries" titleWidth={306.5} time="12:35 PM" changing
            appBar={<><DisplayChange /><DeleteRow /><EntryNav ml={7.5} /><EntryNav next ml={11.5} /></>}
          >
            <Form>
              <Entry label="Company" w={48.5} labelWidth={208.5} field={47} active />
              <Entry label="Company name" w={81} labelWidth={208.5} field={208} />
              <Entry label="Name of company 2" w={106} labelWidth={208.5} field={208} />
              <Group>
                <GroupHead><Text w={104.5}>Detailed information</Text></GroupHead>
                <GroupRows>
                  {DETAILS.map(([label, w, field]) => (
                    <Entry key={label} label={label} w={w} labelWidth={201.5} field={field} />
                  ))}
                </GroupRows>
              </Group>
            </Form>
          </SapWindow>
        </Shots>
        <Note>Update the required fields enter and save</Note>
        <PageNumber>5</PageNumber>
      </Frame>
    </Page>
  );
}
